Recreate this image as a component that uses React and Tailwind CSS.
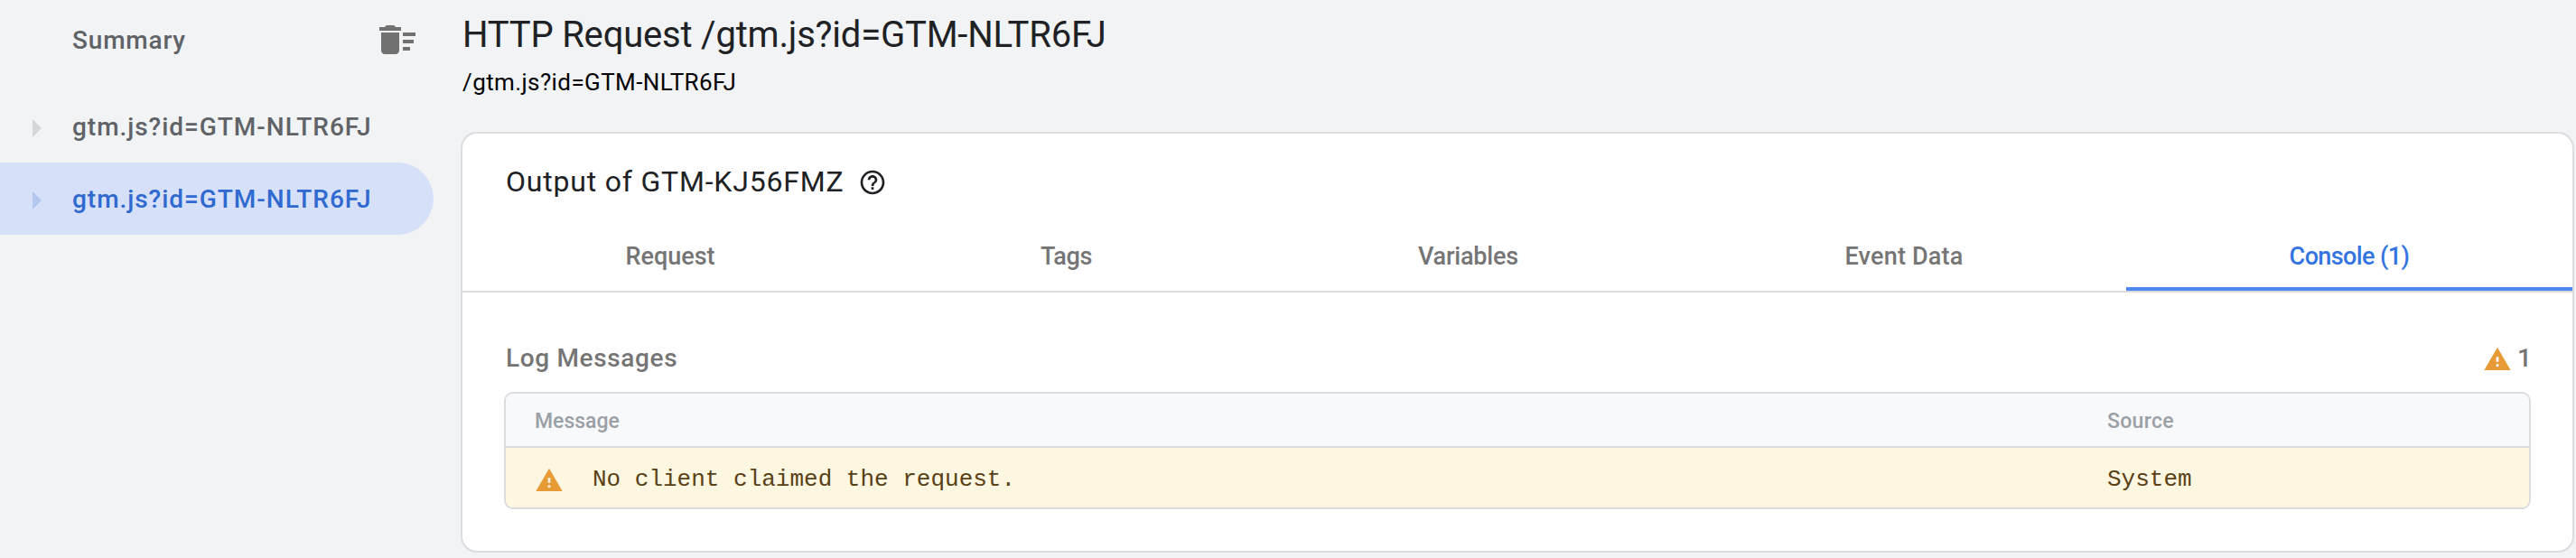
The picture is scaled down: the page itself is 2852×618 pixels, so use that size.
import clsx from 'clsx'

const requests = [
    { id: 1, name: 'gtm.js?id=GTM-NLTR6FJ', selected: false },
    { id: 2, name: 'gtm.js?id=GTM-NLTR6FJ', selected: true },
]

const tabs = [
    { name: 'Request', spacing: 'tracking-normal' },
    { name: 'Tags', spacing: 'tracking-[-0.4px]' },
    { name: 'Variables', spacing: 'tracking-[-0.2px]' },
    { name: 'Event Data', spacing: 'tracking-[0.2px]' },
    { name: 'Console (1)', spacing: 'tracking-[-0.6px]', active: true },
]

const messages = [
    { id: 1, text: 'No client claimed the request.', source: 'System' },
]

function DeleteSweepIcon() {
    return (
        <svg viewBox="0 0 24 24" className="size-12 fill-[#717171]">
            <path d="M15 16h4v2h-4zm0-8h7v2h-7zm0 4h6v2h-6zM3 18c0 1.1.9 2 2 2h6c1.1 0 2-.9 2-2V8H3v10zM14 5h-3c-.3-.6-.7-1-1.300-1H6.300C5.700 4 5.300 4.400 5 5H2v2h12z" />
        </svg>
    )
}

function ArrowIcon({ className }) {
    return (
        <svg viewBox="0 0 24 24" className={clsx('size-12 shrink-0', className)}>
            <path d="M10 17l5-5-5-5v10z" />
        </svg>
    )
}

function HelpIcon() {
    return (
        <svg viewBox="0 0 24 24" className="size-8 fill-[#202124]">
            <path d="M11 18h2v-2h-2v2zm1-16C6.480 2 2 6.480 2 12s4.480 10 10 10 10-4.480 10-10S17.520 2 12 2zm0 18c-4.410 0-8-3.590-8-8s3.590-8 8-8 8 3.590 8 8-3.590 8-8 8zm0-14c-2.210 0-4 1.790-4 4h2c0-1.100.9-2 2-2s2 .9 2 2c0 2-3 1.750-3 5h2c0-2.250 3-2.500 3-5 0-2.210-1.790-4-4-4z" />
        </svg>
    )
}

function WarningIcon({ className }) {
    return (
        <svg viewBox="0 0 24 24" className={clsx('size-8 shrink-0 fill-[#e69b37]', className)}>
            <path d="M1 21h22L12 2 1 21zm12-3h-2v-2h2v2zm0-4h-2v-4h2v4z" />
        </svg>
    )
}

function Sidebar() {
    return (
        <aside className="w-[510px] shrink-0 text-[28px] font-medium text-[#5f6368]">
            <div className="mb-3 flex h-[88px] items-center justify-between pr-[46px] pl-20">
                <span className="pt-0.5 tracking-[0.8px]">Summary</span>
                <DeleteSweepIcon />
            </div>
            {requests.map((request) => (
                <div
                    key={request.id}
                    className={clsx(
                        'mr-[30px] flex h-20 items-center rounded-r-full pl-4',
                        request.selected && 'bg-[#d6e1f9] text-[#3069d0]'
                    )}
                >
                    <ArrowIcon className={clsx('mt-1', request.selected ? 'fill-[#b3c7ef]' : 'fill-[#d5d7d8]')} />
                    <span className="ml-4 pt-0.5 tracking-[0.97px]">{request.name}</span>
                </div>
            ))}
        </aside>
    )
}

function LogTable() {
    return (
        <div className="overflow-hidden rounded-[10px] border-2 border-[#dadce0]">
            <div className="grid h-[60px] grid-cols-[1fr_468px] items-center border-b-2 border-[#dadce0] bg-[#f8f9fb] pt-[5px] pl-8 text-[23px] font-medium text-[#9aa0a6]">
                <span>Message</span>
                <span className="pl-px tracking-[0.3px]">Source</span>
            </div>
            {messages.map((message) => (
                <div
                    key={message.id}
                    className="grid h-[66px] grid-cols-[1fr_468px] items-center bg-[#fdf6e0] pt-1 pl-8 font-['Liberation_Mono',monospace] text-[26px] text-[#594015]"
                >
                    <div className="flex items-center gap-8">
                        <WarningIcon className="mt-0.5" />
                        <span>{message.text}</span>
                    </div>
                    <span className="pl-px">{message.source}</span>
                </div>
            ))}
        </div>
    )
}

export default function App() {
    return (
        <div className="flex h-[618px] w-[2852px] overflow-hidden bg-[#f1f3f4] font-['Roboto',sans-serif]">
            <Sidebar />
            <main className="mr-0.5 flex-1 pt-[13px]">
                <h1 className="pl-0.5 text-[40px] leading-[52px] tracking-[-0.2px] text-[#202124]">HTTP Request /gtm.js?id=GTM-NLTR6FJ</h1>
                <p className="mb-[29px] pl-0.5 text-[26px] leading-[52px] tracking-[0.4px] text-black">/gtm.js?id=GTM-NLTR6FJ</p>

                <section className="rounded-[18px] border-2 border-[#dadce0] bg-white">
                    <div className="flex items-center gap-4 pt-[34px] pb-[22px] pl-12">
                        <h2 className="pb-0.5 text-[32px] leading-[38px] tracking-[0.8px] text-[#202124]">Output of GTM-KJ56FMZ</h2>
                        <HelpIcon />
                    </div>

                    <nav className="grid h-20 grid-cols-[460fr_417fr_473fr_492fr_494fr] border-b-2 border-[#dadce0] text-[27px] font-medium">
                        {tabs.map((tab) => (
                            <button
                                key={tab.name}
                                className={clsx(
                                    'border-b-4 pt-1.5',
                                    tab.spacing,
                                    tab.active ? 'border-[#4f87ed] text-[#3374e0]' : 'border-transparent text-[#757575]'
                                )}
                            >
                                {tab.name}
                            </button>
                        ))}
                    </nav>

                    <div className="px-[46px] pt-[46px] pb-[46px]">
                        <div className="mb-3 flex items-center justify-between pl-0.5 text-[28px] leading-[52px] font-medium text-[#757575]">
                            <h3 className="pt-0.5 leading-[50px] tracking-[0.65px]">Log Messages</h3>
                            <div className="flex items-center gap-1.5">
                                <WarningIcon className="mt-1" />
                                <span className="-mr-px pt-0.5 leading-[50px]">1</span>
                            </div>
                        </div>
                        <LogTable />
                    </div>
                </section>
            </main>
        </div>
    )
}
